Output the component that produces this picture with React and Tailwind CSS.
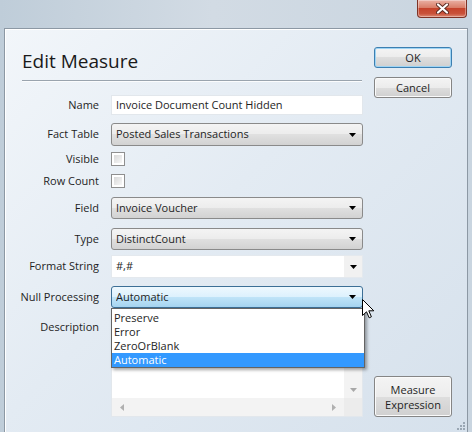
import React from "react";

const comboBg =
  "bg-[linear-gradient(to_bottom,#f4f4f4_0%,#ececec_50%,#e0e0e0_50%,#d2d2d2_100%)]";
const comboActiveBg =
  "bg-[linear-gradient(to_bottom,#eef8fe_0%,#dcf1fd_50%,#c0e4f8_50%,#a5d4f0_100%)]";
const buttonBg =
  "bg-[linear-gradient(to_bottom,#f4f4f4_0%,#ececec_50%,#dedede_50%,#d0d0d0_100%)]";

function DownArrow({ color = "#000" }) {
  return (
    <svg width="7" height="4" viewBox="0 0 7 4">
      <path d="M0 0H7L3.5 4Z" fill={color} />
    </svg>
  );
}

function Combo({ value, active = false, h = "h-[22px]" }) {
  return (
    <div
      className={`${h} w-[252px] flex items-center rounded-[3px] border ${
        active
          ? `border-[#3c6f96] ${comboActiveBg}`
          : `border-[#8a8a8a] ${comboBg}`
      } pl-[4px] pr-[6px]`}
    >
      <span className="flex-1 truncate">{value}</span>
      <DownArrow />
    </div>
  );
}

function Checkbox() {
  return (
    <div className="w-[14px] h-[14px] border border-[#8f8f8f] bg-white p-[2px]">
      <div className="w-full h-full bg-gradient-to-br from-[#d9d9d9] to-[#f7f7f7]" />
    </div>
  );
}

function Row({ label, h, mt, top = false, children }) {
  return (
    <div className={`flex ${h} ${mt} ${top ? "items-start" : "items-center"}`}>
      <div
        className={`w-[94px] text-right shrink-0 ${top ? "pt-[3px]" : ""}`}
      >
        {label}
      </div>
      <div className="ml-[12px]">{children}</div>
    </div>
  );
}

function WinButton({ children, primary = false, className = "" }) {
  return (
    <div
      className={`w-[78px] flex items-center justify-center text-center leading-[15px] rounded-[3px] border ${
        primary
          ? "border-[#3c7fb1] shadow-[inset_0_0_0_1px_#9ed4f4]"
          : "border-[#858585] shadow-[inset_0_0_0_1px_#fafafa]"
      } ${buttonBg} ${className}`}
    >
      {children}
    </div>
  );
}

function CloseButton() {
  return (
    <div className="w-[50px] h-[18px] rounded-b-[4px] border border-t-0 border-[#7e3326] bg-[linear-gradient(to_bottom,#eab1a4_0%,#d97e68_45%,#c5432b_50%,#c9523a_80%,#dc8a74_100%)] flex items-center justify-center shadow-[inset_0_0_0_1px_rgba(255,255,255,0.35)]">
      <svg width="13" height="11" viewBox="0 0 13 11">
        <path
          d="M2 1.5L11 9.5M11 1.5L2 9.5"
          stroke="#5a2a22"
          strokeWidth="4"
          strokeLinecap="round"
        />
        <path
          d="M2 1.5L11 9.5M11 1.5L2 9.5"
          stroke="#ffffff"
          strokeWidth="2.2"
          strokeLinecap="round"
        />
      </svg>
    </div>
  );
}

export default function App() {
  return (
    <div className="w-[472px] h-[432px] flex flex-col overflow-hidden bg-[linear-gradient(to_right,#bfcdd9_0%,#d2dbe4_45%,#c9d5e0_100%)] font-['Open_Sans',sans-serif] text-[11px] text-[#1e1e1e]">
      {/* window caption */}
      <div className="h-[28px] shrink-0 flex justify-end pr-[5px]">
        <CloseButton />
      </div>

      {/* client area */}
      <div className="relative flex-1 flex mx-[4px] border border-b-0 border-[#8c98a4] bg-[linear-gradient(135deg,#f2f6fa_0%,#e3ebf3_45%,#d6e1ec_100%)] shadow-[inset_1px_1px_0_#ffffff]">
        {/* form column */}
        <div className="w-[364px] flex flex-col">
          <div className="pl-[17px] mt-[19px]">
            <div className="text-[19px] leading-[26px] text-[#1a1a1a]">
              Edit Measure
            </div>
            <div className="mt-[6px] w-[340px] h-[2px] border-t border-[#9aa4ae] bg-[#fbfcfd]" />
          </div>

          <Row label="Name" h="h-[20px]" mt="mt-[13px]">
            <div className="w-[252px] h-[20px] bg-white border border-[#e2e7ec] flex items-center pl-[4px]">
              Invoice Document Count Hidden
            </div>
          </Row>

          <Row label="Fact Table" h="h-[23px]" mt="mt-[8px]">
            <Combo value="Posted Sales Transactions" h="h-[23px]" />
          </Row>

          <Row label="Visible" h="h-[20px]" mt="mt-[3px]">
            <Checkbox />
          </Row>

          <Row label="Row Count" h="h-[20px]" mt="mt-[2px]">
            <Checkbox />
          </Row>

          <Row label="Field" h="h-[22px]" mt="mt-[6px]">
            <Combo value="Invoice Voucher" />
          </Row>

          <Row label="Type" h="h-[22px]" mt="mt-[9px]">
            <Combo value="DistinctCount" />
          </Row>

          <Row label="Format String" h="h-[23px]" mt="mt-[5px]">
            <div className="w-[252px] h-[23px] bg-white border border-[#e4e9ee] flex items-stretch">
              <span className="flex-1 pl-[4px] flex items-center">#,#</span>
              <div className="w-[18px] bg-[#f1f1f1] flex items-center justify-center">
                <DownArrow />
              </div>
            </div>
          </Row>

          <Row label="Null Processing" h="h-[22px]" mt="mt-[8px]">
            <Combo value="Automatic" active />
          </Row>

          <Row label="Description" h="h-[101px]" mt="mt-[8px]" top>
            <div className="w-[252px] h-[101px] bg-white border border-[#e2e7ec] flex flex-col">
              <div className="flex-1 flex">
                <div className="flex-1" />
                <div className="w-[18px] bg-[#f3f3f3] flex flex-col justify-end">
                  <div className="h-[17px] flex items-center justify-center">
                    <DownArrow color="#a8a8a8" />
                  </div>
                </div>
              </div>
              <div className="h-[18px] flex">
                <div className="flex-1 bg-[#f3f3f3] flex items-center justify-between px-[8px]">
                  <svg width="4" height="7" viewBox="0 0 4 7">
                    <path d="M4 0V7L0 3.5Z" fill="#b0b0b0" />
                  </svg>
                  <svg width="4" height="7" viewBox="0 0 4 7">
                    <path d="M0 0V7L4 3.5Z" fill="#b0b0b0" />
                  </svg>
                </div>
                <div className="w-[18px] bg-[#ececec]" />
              </div>
            </div>
          </Row>
        </div>

        {/* button column */}
        <div className="w-[78px] ml-[5px] flex flex-col pt-[18px] pb-[15px]">
          <WinButton primary className="h-[21px]">
            OK
          </WinButton>
          <WinButton className="h-[21px] mt-[9px]">Cancel</WinButton>
          <WinButton className="h-[41px] mt-auto">
            Measure
            <br />
            Expression
          </WinButton>
        </div>

        {/* open drop-down list of the Null Processing combo */}
        <div className="absolute left-[106px] top-[279px] w-[254px] h-[60px] bg-white border border-[#646464] shadow-[2px_2px_3px_rgba(0,0,0,0.35)] pt-[2px] leading-[14px]">
          <div className="h-[14px] pl-[2px]">Preserve</div>
          <div className="h-[14px] pl-[2px]">Error</div>
          <div className="h-[14px] pl-[2px]">ZeroOrBlank</div>
          <div className="h-[14px] pl-[2px] bg-[#3399ff] text-white">
            Automatic
          </div>
        </div>

        {/* mouse pointer */}
        <svg
          className="absolute left-[357px] top-[270px]"
          width="13"
          height="20"
          viewBox="0 0 13 20"
        >
          <path
            d="M0.5 0.5V16.5L4.5 12.8L7.2 18.8L9.4 17.8L6.8 11.8H11.8Z"
            fill="#ffffff"
            stroke="#000000"
            strokeWidth="1"
            strokeLinejoin="round"
          />
        </svg>

        {/* size grip */}
        <svg
          className="absolute right-[2px] bottom-[2px]"
          width="9"
          height="9"
          viewBox="0 0 9 9"
        >
          <g fill="#9aa7b4">
            <rect x="7" y="1" width="2" height="2" />
            <rect x="4" y="4" width="2" height="2" />
            <rect x="7" y="4" width="2" height="2" />
            <rect x="1" y="7" width="2" height="2" />
            <rect x="4" y="7" width="2" height="2" />
            <rect x="7" y="7" width="2" height="2" />
          </g>
        </svg>
      </div>
    </div>
  );
}
